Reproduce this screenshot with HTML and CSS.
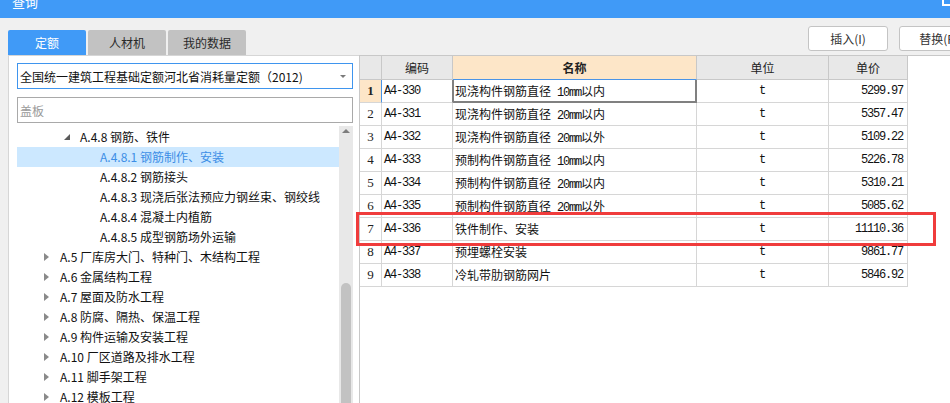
FILE: index.html
```html
<!DOCTYPE html>
<html lang="zh-CN">
<head>
<meta charset="utf-8">
<title>查询</title>
<link rel="stylesheet" href="styles.css">
</head>
<body>
<div class="window">
  <div class="titlebar"><span class="title">查询</span><span class="win-max"></span></div>
  <div class="toolbar">
    <div class="tabs">
      <div class="tab active">定额</div>
      <div class="tab">人材机</div>
      <div class="tab">我的数据</div>
    </div>
    <div class="actions">
      <button class="btn">插入(I)</button>
      <button class="btn">替换(R)</button>
    </div>
  </div>
  <div class="main">
    <div class="left">
      <div class="select"><span class="select-text">全国统一建筑工程基础定额河北省消耗量定额（2012)</span><span class="caret"></span></div>
      <div class="search"><span class="placeholder">盖板</span></div>
      <div class="tree-wrap">
        <ul class="tree">
          <li class="node lv1"><span class="tw open"></span>A.4.8 钢筋、铁件</li>
          <li class="node lv2 selected"><span class="tw"></span>A.4.8.1 钢筋制作、安装</li>
          <li class="node lv2"><span class="tw"></span>A.4.8.2 钢筋接头</li>
          <li class="node lv2"><span class="tw"></span>A.4.8.3 现浇后张法预应力钢丝束、钢绞线</li>
          <li class="node lv2"><span class="tw"></span>A.4.8.4 混凝土内植筋</li>
          <li class="node lv2"><span class="tw"></span>A.4.8.5 成型钢筋场外运输</li>
          <li class="node lv0"><span class="tw closed"></span>A.5 厂库房大门、特种门、木结构工程</li>
          <li class="node lv0"><span class="tw closed"></span>A.6 金属结构工程</li>
          <li class="node lv0"><span class="tw closed"></span>A.7 屋面及防水工程</li>
          <li class="node lv0"><span class="tw closed"></span>A.8 防腐、隔热、保温工程</li>
          <li class="node lv0"><span class="tw closed"></span>A.9 构件运输及安装工程</li>
          <li class="node lv0"><span class="tw closed"></span>A.10 厂区道路及排水工程</li>
          <li class="node lv0"><span class="tw closed"></span>A.11 脚手架工程</li>
          <li class="node lv0"><span class="tw closed"></span>A.12 模板工程</li>
        </ul>
        <div class="vscroll"><span class="up"></span><span class="thumb"></span></div>
      </div>
    </div>
    <div class="right">
      <div class="grid">
        <div class="c h"></div>
        <div class="c h">编码</div>
        <div class="c h cur-col">名称</div>
        <div class="c h">单位</div>
        <div class="c h">单价</div>

        <div class="c n cur-row">1</div>
        <div class="c code focus-left">A4-330</div>
        <div class="c name focus">现浇构件钢筋直径<span class="m">&nbsp;10mm</span>以内</div>
        <div class="c unit">t</div>
        <div class="c price">5299.97</div>

        <div class="c n">2</div>
        <div class="c code">A4-331</div>
        <div class="c name">现浇构件钢筋直径<span class="m">&nbsp;20mm</span>以内</div>
        <div class="c unit">t</div>
        <div class="c price">5357.47</div>

        <div class="c n">3</div>
        <div class="c code">A4-332</div>
        <div class="c name">现浇构件钢筋直径<span class="m">&nbsp;20mm</span>以外</div>
        <div class="c unit">t</div>
        <div class="c price">5109.22</div>

        <div class="c n">4</div>
        <div class="c code">A4-333</div>
        <div class="c name">预制构件钢筋直径<span class="m">&nbsp;10mm</span>以内</div>
        <div class="c unit">t</div>
        <div class="c price">5226.78</div>

        <div class="c n">5</div>
        <div class="c code">A4-334</div>
        <div class="c name">预制构件钢筋直径<span class="m">&nbsp;20mm</span>以内</div>
        <div class="c unit">t</div>
        <div class="c price">5310.21</div>

        <div class="c n">6</div>
        <div class="c code">A4-335</div>
        <div class="c name">预制构件钢筋直径<span class="m">&nbsp;20mm</span>以外</div>
        <div class="c unit">t</div>
        <div class="c price">5085.62</div>

        <div class="c n">7</div>
        <div class="c code">A4-336</div>
        <div class="c name">铁件制作、安装</div>
        <div class="c unit">t</div>
        <div class="c price">11110.36</div>

        <div class="c n">8</div>
        <div class="c code">A4-337</div>
        <div class="c name">预埋螺栓安装</div>
        <div class="c unit">t</div>
        <div class="c price">9861.77</div>

        <div class="c n">9</div>
        <div class="c code">A4-338</div>
        <div class="c name">冷轧带肋钢筋网片</div>
        <div class="c unit">t</div>
        <div class="c price">5846.92</div>
      </div>
    </div>
  </div>
  <div class="annot"></div>
</div>
</body>
</html>
```

FILE: styles.css
```css
html, body {
  margin: 0;
  padding: 0;
}
body {
  background: #f0f0f0;
  font-family: "Noto Sans CJK SC", "Microsoft YaHei", sans-serif;
  font-size: 12px;
  color: #1a1a1a;
  width: 950px;
  height: 403px;
  overflow: hidden;
}
.window {
  position: relative;
  width: 950px;
  height: 403px;
  overflow: hidden;
}

/* title bar */
.titlebar {
  height: 18px;
  background: #409af7;
  display: flex;
  overflow: hidden;
}
.title {
  color: #fff;
  font-size: 13px;
  line-height: 14px;
  margin: -5px 0 0 12px;
}
.win-max {
  margin-left: auto;
  width: 10px;
  height: 10px;
  border: 2px solid #fff;
  margin-top: -8px;
  margin-right: -6px;
}

/* toolbar with tabs and buttons */
.toolbar {
  height: 37px;
  width: 979px;
  box-sizing: border-box;
  padding-left: 8px;
  display: flex;
}
.tabs {
  display: flex;
  gap: 2px;
  align-self: flex-end;
}
.tab {
  width: 78px;
  height: 25px;
  display: flex;
  align-items: center;
  justify-content: center;
  background: #c2c2c2;
  color: #2a2a2a;
  border-radius: 2px 2px 0 0;
  line-height: 1;
}
.tab.active {
  background: #409af7;
  color: #fff;
}
.actions {
  margin-left: auto;
  margin-top: 8px;
  display: flex;
  gap: 11px;
}
.btn {
  width: 80px;
  height: 25px;
  padding: 0;
  background: #fff;
  border: 1px solid #c4c4c4;
  border-radius: 3px;
  font-family: inherit;
  font-size: 12px;
  color: #333;
  line-height: 1;
}

/* main area */
.main {
  display: flex;
  height: 348px;
}
.left {
  width: 351px;
  margin-left: 8px;
  box-sizing: border-box;
  background: #fff;
  border-left: 1px solid #d6d6d6;
  border-top: 1px solid #d6d6d6;
  padding: 7px 0 0 8px;
  display: flex;
  flex-direction: column;
  overflow: hidden;
}
.select {
  width: 336px;
  height: 26px;
  box-sizing: border-box;
  border: 1px solid #3f95ee;
  display: flex;
  align-items: center;
  padding: 0 6px 0 2px;
  color: #111;
}
.select-text {
  flex: 1;
  white-space: nowrap;
}
.caret {
  width: 0;
  height: 0;
  border-left: 3px solid transparent;
  border-right: 3px solid transparent;
  border-top: 3px solid #7a7a7a;
}
.search {
  width: 336px;
  height: 26px;
  box-sizing: border-box;
  margin-top: 8px;
  border: 1px solid #a9a9a9;
  display: flex;
  align-items: center;
  padding-left: 2px;
}
.placeholder {
  color: #9a9a9a;
}
.tree-wrap {
  margin-top: 3px;
  display: flex;
  flex: 1;
  min-height: 0;
}
.tree {
  list-style: none;
  margin: 0;
  padding: 1px 0 0 0;
  width: 322px;
}
.node {
  height: 20px;
  line-height: 20px;
  white-space: nowrap;
  display: flex;
  align-items: center;
  color: #111;
  font-size: 12px;
}
.node.lv0 { padding-left: 23px; }
.node.lv1 { padding-left: 43px; }
.node.lv2 { padding-left: 63px; }
.node.selected {
  background: #cce8ff;
  color: #3c8ee6;
}
.tw {
  width: 20px;
  height: 20px;
  flex: none;
  display: flex;
  align-items: center;
  padding-left: 4px;
  box-sizing: border-box;
}
.tw.closed::before {
  content: "";
  width: 0;
  height: 0;
  border-left: 5px solid #8a8a8a;
  border-top: 4px solid transparent;
  border-bottom: 4px solid transparent;
}
.tw.open::before {
  content: "";
  width: 0;
  height: 0;
  border-right: 6px solid #5a5a5a;
  border-top: 6px solid transparent;
}
.vscroll {
  width: 14px;
  background: #e8e8e8;
  display: flex;
  flex-direction: column;
  align-items: center;
}
.up {
  margin-top: 3px;
  width: 0;
  height: 0;
  border-left: 4px solid transparent;
  border-right: 4px solid transparent;
  border-bottom: 4px solid #7d7d7d;
}
.thumb {
  margin-top: 150px;
  width: 10px;
  height: 200px;
  background: #c2c2c2;
  border-radius: 5px 5px 0 0;
}

/* right grid */
.right {
  flex: 1;
  background: #fff;
  border-left: 1px solid #c8c8c8;
  border-top: 1px solid #c8c8c8;
}
.grid {
  display: grid;
  grid-template-columns: 22px 71px 244px 132px 79px;
  grid-template-rows: 24px;
  grid-auto-rows: 23px;
  width: 548px;
}
.c {
  box-sizing: border-box;
  border-right: 1px solid #d6d6d6;
  border-bottom: 1px solid #d6d6d6;
  line-height: 22px;
  white-space: nowrap;
  overflow: hidden;
  color: #111;
  font-size: 12px;
}
.c.h {
  background: #e8e8e8;
  border-color: #c8c8c8;
  text-align: center;
  line-height: 23px;
  color: #222;
}
.c.h.cur-col {
  background: #fde6c8;
  font-weight: bold;
  border-bottom-color: #4a94e6;
}
.c.n {
  text-align: center;
  font-family: "Liberation Serif", serif;
  font-size: 13px;
  color: #222;
}
.c.n.cur-row {
  background: #fde6c8;
  font-weight: bold;
  border-right-color: #4a94e6;
}
.c.code,
.c.price,
.c.unit,
.m {
  font-family: "Liberation Mono", monospace;
  font-size: 12px;
  letter-spacing: -1.2px;
}
.c.code {
  padding-left: 2px;
}
.c.code.focus-left {
  border-right-color: #808080;
}
.c.name {
  padding-left: 2px;
}
.c.name.focus {
  border-right-color: #808080;
  border-bottom-color: #808080;
  box-shadow: inset 1px 0 0 #808080, inset -1px 0 0 #808080, inset 0 -1px 0 #808080;
}
.c.unit {
  text-align: center;
  letter-spacing: 0;
}
.c.price {
  text-align: right;
  padding-right: 4px;
}

/* annotation box drawn over the screenshot */
.annot {
  position: absolute;
  left: 356px;
  top: 212px;
  width: 580px;
  height: 34px;
  box-sizing: border-box;
  border: 3px solid #f03c3c;
  pointer-events: none;
}
```
